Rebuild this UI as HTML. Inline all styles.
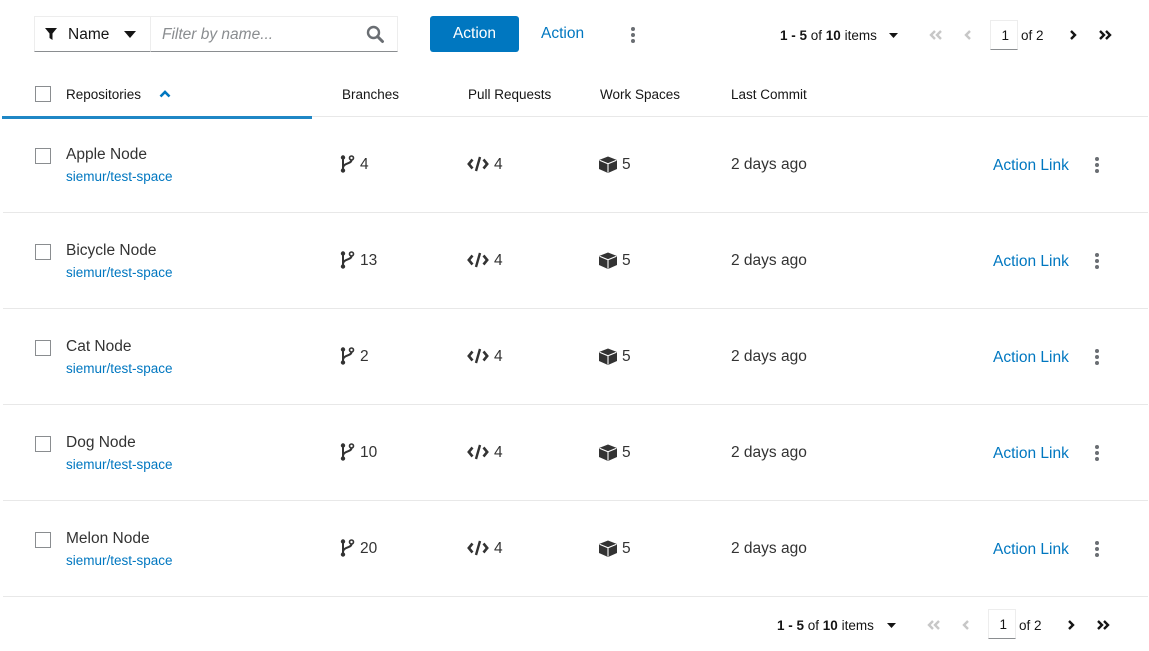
<!DOCTYPE html>
<html><head><meta charset="utf-8"><style>
*{margin:0;padding:0;box-sizing:border-box}
body{width:1149px;height:651px;background:#fff;font-family:"Liberation Sans",sans-serif;color:#151515;position:relative;overflow:hidden}
.a{position:absolute;white-space:nowrap}
.cb{position:absolute;width:16px;height:16px;border:1px solid #8a8d90;background:#fff}
.blue{color:#0077c0}
.sep{position:absolute;left:3px;width:1145px;height:1px;background:#e8e8e8}
.kb{position:absolute;width:4px}
.kb i{display:block;width:4px;height:4px;border-radius:50%;background:#6a6e73;margin-bottom:2px}
.t15{font-size:15.5px}
</style></head><body>
<!-- toolbar -->
<div class="a" style="left:34px;top:16px;width:117px;height:36px;border:1px solid #ededed;border-bottom:1px solid #8a8d90"></div>
<svg class="a" style="left:44px;top:27px" width="14" height="14" viewBox="0 0 14 14"><path d="M1 1h12L8.5 6.5V13L5.5 11V6.5Z" fill="#151515"/></svg>
<div class="a t15" style="left:68px;top:26px;color:#151515">Name</div>
<svg class="a" style="left:124px;top:31px" width="12" height="7"><path d="M0 0h12L6 7Z" fill="#151515"/></svg>
<div class="a" style="left:150px;top:16px;width:248px;height:36px;border:1px solid #ededed;border-bottom:1px solid #8a8d90"></div>
<div class="a t15" style="left:162px;top:26px;color:#8a8d90;font-style:italic">Filter by name...</div>
<svg class="a" style="left:366px;top:25px" width="19" height="19" viewBox="0 0 19 19"><circle cx="7.5" cy="7.5" r="5.5" fill="none" stroke="#6a6e73" stroke-width="2.4"/><path d="M11.5 11.5l5 5" stroke="#6a6e73" stroke-width="3" stroke-linecap="round"/></svg>
<div class="a" style="left:430px;top:16px;width:89px;height:36px;background:#0077c0;border-radius:3px;color:#fff;font-size:15.5px;line-height:36px;text-align:center">Action</div>
<div class="a t15 blue" style="left:541px;top:25px">Action</div>
<div class="kb" style="left:631px;top:27px"><i></i><i></i><i></i></div>
<!-- top pagination -->
<div class="a" style="left:780px;top:28px;font-size:13.5px"><b>1 - 5</b> of <b>10</b> items</div>
<svg class="a" style="left:889px;top:33px" width="9" height="5"><path d="M0 0h9L4.5 5Z" fill="#151515"/></svg>
<svg class="a" style="left:929px;top:30px" width="14" height="10"><path d="M6 1L2 5l4 4M12 1L8 5l4 4" fill="none" stroke="#c7c7c7" stroke-width="2.4"/></svg>
<svg class="a" style="left:964px;top:30px" width="8" height="10"><path d="M6 1L2 5l4 4" fill="none" stroke="#c7c7c7" stroke-width="2.4"/></svg>
<div class="a" style="left:990px;top:20px;width:28px;height:30px;border:1px solid #ededed;border-bottom:1px solid #8a8d90;font-size:13.5px;text-align:right;padding:7px 8px 0 0">1</div>
<div class="a" style="left:1021px;top:28px;font-size:13.5px">of 2</div>
<svg class="a" style="left:1069px;top:30px" width="8" height="10"><path d="M2 1l4 4-4 4" fill="none" stroke="#151515" stroke-width="2.4"/></svg>
<svg class="a" style="left:1098px;top:30px" width="14" height="10"><path d="M2 1l4 4-4 4M8 1l4 4-4 4" fill="none" stroke="#151515" stroke-width="2.4"/></svg>
<!-- header -->
<div class="cb" style="left:35px;top:86px"></div>
<div class="a" style="left:66px;top:87px;font-size:13.5px">Repositories</div>
<svg class="a" style="left:159px;top:90px" width="12" height="8"><path d="M1.5 6.5L6 2l4.5 4.5" fill="none" stroke="#0077c0" stroke-width="2.6"/></svg>
<div class="a" style="left:342px;top:87px;font-size:13.5px">Branches</div>
<div class="a" style="left:468px;top:87px;font-size:13.5px">Pull Requests</div>
<div class="a" style="left:600px;top:87px;font-size:13.5px">Work Spaces</div>
<div class="a" style="left:731px;top:87px;font-size:13.5px">Last Commit</div>
<div class="sep" style="top:116px"></div>
<div class="a" style="left:2px;top:116px;width:310px;height:3px;background:#1f87c5"></div>

<div id="rows"></div>
<script>
var d=[["Apple Node","4"],["Bicycle Node","13"],["Cat Node","2"],["Dog Node","10"],["Melon Node","20"]];
var h="";
d.forEach(function(r,i){var y=i*96;
h+='<div class="cb" style="left:35px;top:'+(148+y)+'px"></div>';
h+='<div class="a t15" style="left:66px;top:'+(146+y)+'px;color:#333">'+r[0]+'</div>';
h+='<div class="a blue" style="left:66px;top:'+(169+y)+'px;font-size:13.5px">siemur/test-space</div>';
h+='<svg class="a" style="left:339px;top:'+(155+y)+'px" width="16" height="18" viewBox="0 0 16 18"><circle cx="4" cy="2.5" r="2.2" fill="#333"/><circle cx="4" cy="15.5" r="2.2" fill="#333"/><circle cx="12.5" cy="3" r="2" fill="none" stroke="#333" stroke-width="1.6"/><path d="M4 3v12M12.5 5c0 4-8.5 3-8.5 8" fill="none" stroke="#333" stroke-width="2"/></svg>';
h+='<div class="a t15" style="left:360px;top:'+(156+y)+'px;color:#333">'+r[1]+'</div>';
h+='<svg class="a" style="left:467px;top:'+(156+y)+'px" width="22" height="16" viewBox="0 0 22 16"><path d="M5.5 3.5L1.8 8l3.7 4.5M16.5 3.5L20.2 8l-3.7 4.5" fill="none" stroke="#333" stroke-width="2.6"/><path d="M13 1L9 15" stroke="#333" stroke-width="2.4"/></svg>';
h+='<div class="a t15" style="left:494px;top:'+(156+y)+'px;color:#333">4</div>';
h+='<svg class="a" style="left:598px;top:'+(156+y)+'px" width="20" height="17" viewBox="0 0 20 17"><path d="M10 0.5L19 4v9l-9 4-9-4V4Z" fill="#333"/><path d="M1.5 4.2L10 7.8l8.5-3.6M10 7.8V16.5" fill="none" stroke="#fff" stroke-width="1.1"/></svg>';
h+='<div class="a t15" style="left:622px;top:'+(156+y)+'px;color:#333">5</div>';
h+='<div class="a t15" style="left:731px;top:'+(156+y)+'px;color:#333">2 days ago</div>';
h+='<div class="a t15 blue" style="left:993px;top:'+(157+y)+'px">Action Link</div>';
h+='<div class="kb" style="left:1095px;top:'+(157+y)+'px"><i></i><i></i><i></i></div>';
h+='<div class="sep" style="top:'+(212+y)+'px"></div>';
});
document.getElementById("rows").innerHTML=h;
</script>
<!-- bottom pagination -->
<div class="a" style="left:777px;top:618px;font-size:13.5px"><b>1 - 5</b> of <b>10</b> items</div>
<svg class="a" style="left:887px;top:623px" width="9" height="5"><path d="M0 0h9L4.5 5Z" fill="#151515"/></svg>
<svg class="a" style="left:927px;top:620px" width="14" height="10"><path d="M6 1L2 5l4 4M12 1L8 5l4 4" fill="none" stroke="#c7c7c7" stroke-width="2.4"/></svg>
<svg class="a" style="left:962px;top:620px" width="8" height="10"><path d="M6 1L2 5l4 4" fill="none" stroke="#c7c7c7" stroke-width="2.4"/></svg>
<div class="a" style="left:988px;top:609px;width:28px;height:30px;border:1px solid #ededed;border-bottom:1px solid #8a8d90;font-size:13.5px;text-align:right;padding:7px 8px 0 0">1</div>
<div class="a" style="left:1019px;top:618px;font-size:13.5px">of 2</div>
<svg class="a" style="left:1067px;top:620px" width="8" height="10"><path d="M2 1l4 4-4 4" fill="none" stroke="#151515" stroke-width="2.4"/></svg>
<svg class="a" style="left:1096px;top:620px" width="14" height="10"><path d="M2 1l4 4-4 4M8 1l4 4-4 4" fill="none" stroke="#151515" stroke-width="2.4"/></svg>
</body></html>
